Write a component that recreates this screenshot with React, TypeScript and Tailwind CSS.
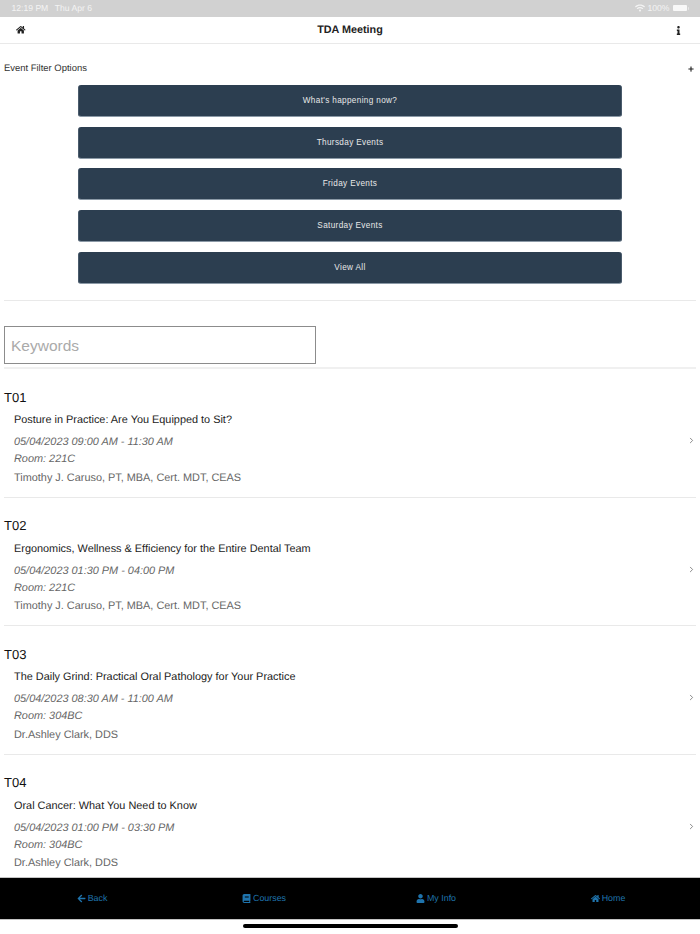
import { FaArrowLeft, FaBook, FaHome, FaInfo, FaPlus, FaUser, FaWifi } from "react-icons/fa";
import { FiChevronRight } from "react-icons/fi";

const filters = [
  "What's happening now?",
  "Thursday Events",
  "Friday Events",
  "Saturday Events",
  "View All",
];

const courses = [
  {
    code: "T01",
    title: "Posture in Practice: Are You Equipped to Sit?",
    time: "05/04/2023 09:00 AM - 11:30 AM",
    room: "Room: 221C",
    speaker: "Timothy J. Caruso, PT, MBA, Cert. MDT, CEAS",
  },
  {
    code: "T02",
    title: "Ergonomics, Wellness & Efficiency for the Entire Dental Team",
    time: "05/04/2023 01:30 PM - 04:00 PM",
    room: "Room: 221C",
    speaker: "Timothy J. Caruso, PT, MBA, Cert. MDT, CEAS",
  },
  {
    code: "T03",
    title: "The Daily Grind: Practical Oral Pathology for Your Practice",
    time: "05/04/2023 08:30 AM - 11:00 AM",
    room: "Room: 304BC",
    speaker: "Dr.Ashley Clark, DDS",
  },
  {
    code: "T04",
    title: "Oral Cancer: What You Need to Know",
    time: "05/04/2023 01:00 PM - 03:30 PM",
    room: "Room: 304BC",
    speaker: "Dr.Ashley Clark, DDS",
  },
];

const tabs = [
  { label: "Back", icon: FaArrowLeft },
  { label: "Courses", icon: FaBook },
  { label: "My Info", icon: FaUser },
  { label: "Home", icon: FaHome },
];

const CourseRow = ({ course }: { course: (typeof courses)[number] }) => (
  <div className="relative mx-1 h-[128.5px] border-b border-[#e9e9e9] pt-[18.5px]">
    <h2 className="h-[20px] text-[13px] leading-[20px] text-[#111]">{course.code}</h2>
    <div className="pl-[10px]">
      <p className="mt-[2.5px] text-[10.9px] leading-[20px] text-[#222]">{course.title}</p>
      <p className="mt-[3px] text-[10.9px] italic leading-[18px] text-[#666]">{course.time}</p>
      <p className="text-[10.9px] italic leading-[17px] text-[#666]">{course.room}</p>
      <p className="mt-[0.5px] text-[10.9px] leading-[18px] text-[#666]">{course.speaker}</p>
    </div>
    <FiChevronRight className="absolute right-0 top-[67px] text-[9px] text-[#666]" />
  </div>
);

export default function App() {
  return (
    <div className="flex h-[934px] w-[700px] flex-col overflow-hidden bg-white font-['Liberation_Sans',sans-serif] [text-rendering:geometricPrecision]">
      <div className="flex h-[17px] shrink-0 items-center justify-between bg-[#d1d1d1] pl-[11.5px] pr-[11px] text-[8.6px] text-[#f4f4f4]">
        <div className="flex gap-[6.5px]">
          <span>12:19 PM</span>
          <span>Thu Apr 6</span>
        </div>
        <div className="flex items-center gap-[3px]">
          <FaWifi className="text-[10px]" />
          <span>100%</span>
          <div className="flex items-center gap-[1px]">
            <div className="h-[6px] w-[14px] rounded-[1px] bg-[#f8f8f8]" />
            <div className="h-[3px] w-[1.5px] rounded-r-[1px] bg-[#e6e6e6]" />
          </div>
        </div>
      </div>

      <header className="flex h-[27px] shrink-0 items-center justify-between border-b border-[#e9e9e9] pl-[16px] pr-[16.5px]">
        <FaHome className="text-[9.5px] text-[#222]" />
        <h1 className="text-[10.8px] font-bold text-[#222]">TDA Meeting</h1>
        <FaInfo className="text-[9px] text-[#222]" />
      </header>

      <section className="mx-1 h-[257px] shrink-0 border-b border-[#e9e9e9] pt-[18.5px]">
        <div className="flex h-[14px] items-center justify-between text-[9.45px] text-[#333]">
          <span>Event Filter Options</span>
          <FaPlus className="mb-[2px] mr-[2px] text-[6px] text-[#222]" />
        </div>
        <div className="mt-[8.5px] flex flex-col gap-[9.7px] px-[74px]">
          {filters.map((filter) => (
            <button
              key={filter}
              className="h-[32px] rounded-[3px] border-x border-b border-x-[#4a5b6c] border-b-[#8b99a6] bg-[#2c3e50] pt-[1.5px] text-[8.2px] tracking-[0.35px] text-[#e8e8e8]"
            >
              {filter}
            </button>
          ))}
        </div>
      </section>

      <section className="mx-1 h-[68px] shrink-0 border-b-2 border-[#f0f0f0] pt-[25px]">
        <input
          placeholder="Keywords"
          className="h-[38px] w-[312px] border border-[#8c8c8c] px-[6px] pt-[1px] text-[15.5px] outline-none placeholder:text-[#aaa]"
        />
      </section>

      <main className="min-h-0 flex-1 overflow-hidden">
        {courses.map((course) => (
          <CourseRow key={course.code} course={course} />
        ))}
      </main>

      <nav className="grid h-[43px] shrink-0 grid-cols-4 border-y border-[#c4c4c4] bg-black px-[6px]">
        {tabs.map(({ label, icon: Icon }) => (
          <div key={label} className="flex items-center justify-center gap-[2px] text-[8.9px] text-[#1f74ad]">
            <Icon className="text-[9px]" />
            <span className="pt-[1px]">{label}</span>
          </div>
        ))}
      </nav>

      <div className="flex h-[14px] shrink-0 justify-center pt-[4px]">
        <div className="h-[4px] w-[215px] rounded-full bg-black" />
      </div>
    </div>
  );
}
